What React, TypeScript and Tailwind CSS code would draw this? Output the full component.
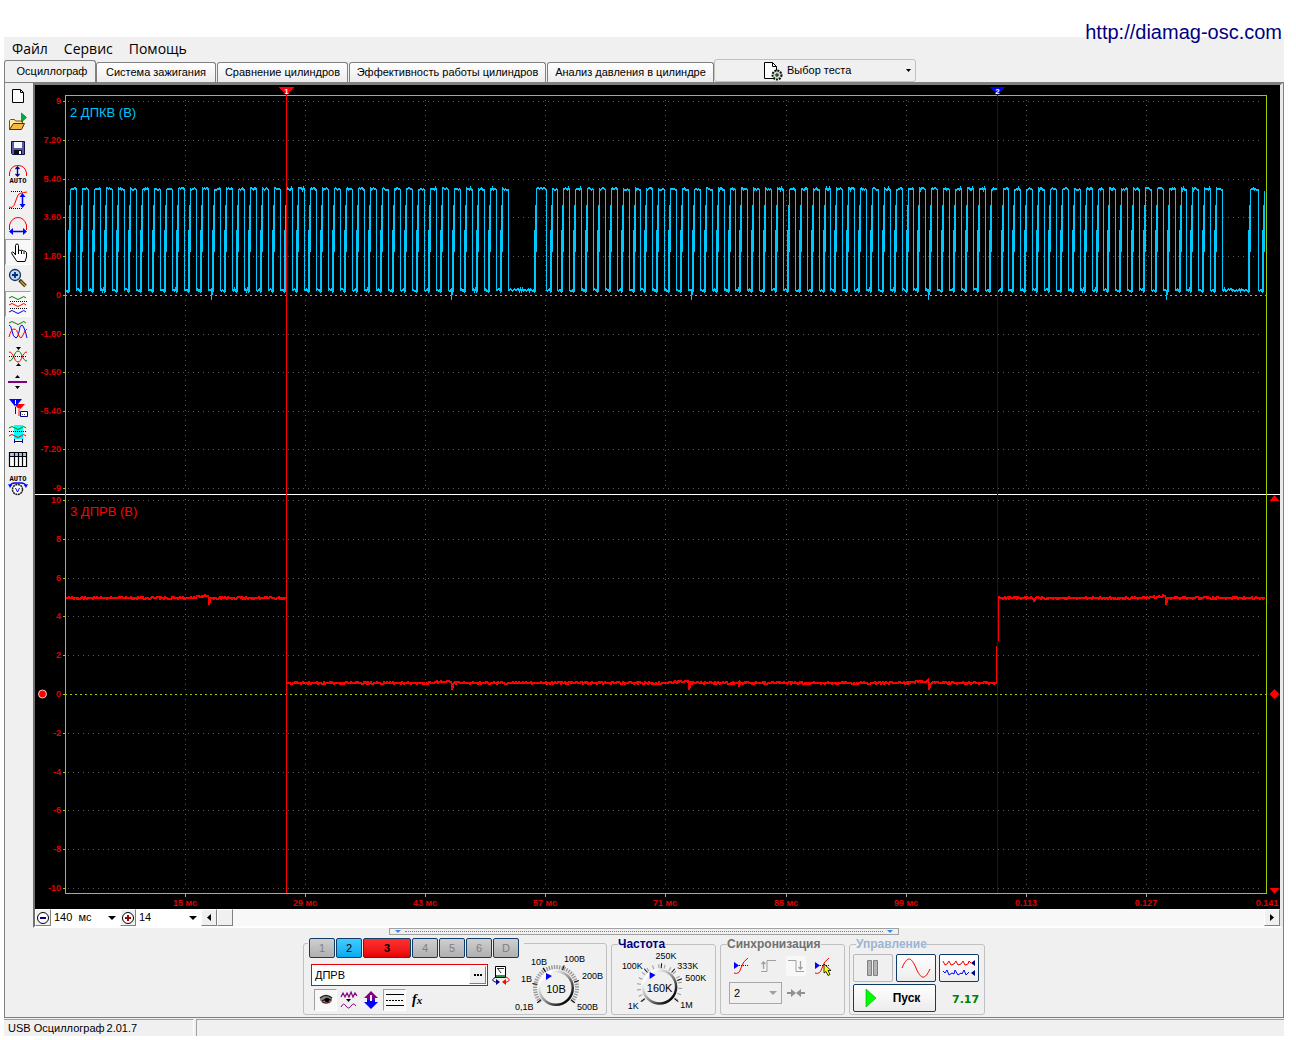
import type { ReactNode } from "react";
import { clsx } from "clsx";

const PLOT = { left: 65, right: 1266, top: 95, bottom: 893 };
const GRID_X = [185, 305, 425, 545, 665, 786, 906, 1026, 1146];
const TIME_LABELS = ["15 мс", "29 мс", "43 мс", "57 мс", "71 мс", "85 мс", "99 мс", "0.113", "0.127", "0.141"];
const ROWS_TOP: [number, string][] = [
  [101, "9"], [140, "7.20"], [179, "5.40"], [217, "3.60"], [256, "1.80"], [295, "0"],
  [334, "-1.80"], [372, "-3.60"], [411, "-5.40"], [449, "-7.20"], [488, "-9"],
];
const ROWS_BOTTOM: [number, string][] = [
  [500, "10"], [539, "8"], [578, "6"], [616, "4"], [655, "2"], [694, "0"],
  [733, "-2"], [772, "-4"], [810, "-6"], [849, "-8"], [888, "-10"],
];

// small repeatable noise, -1..1
const noise = (n: number) => {
  const v = Math.sin(n * 127.1) * 43758.5453;
  return (v - Math.floor(v)) * 2 - 1;
};

const crankTrace = () => {
  const falls: number[] = [];
  for (let k = 0; k <= 36; k++) falls.push(Math.round(76 + k * 12.01));
  for (let k = 0; k <= 57; k++) falls.push(Math.round(545.5 + k * 11.87));
  falls.push(1258);

  const pts: [number, number][] = [];
  const rising = (x: number) => {
    pts.push([x, 291], [x, 230], [x + 1, 230], [x + 1, 290], [x + 1, 205], [x + 2, 205], [x + 2, 250], [x + 2, 190]);
  };

  pts.push([66, 290]);
  rising(68);
  let x = 70;
  falls.forEach((fall, i) => {
    for (; x < fall; x++) pts.push([x, Math.round(188 + noise(x * 3 + i) * 1.2)]);
    pts.push([fall, 189], [fall, 289]);
    const next = falls[i + 1] ?? 1275;
    const rise = next - fall > 20 ? fall + 26 : fall + 4;
    for (x = fall + 1; x < rise; x++) pts.push([x, Math.round(289 + noise(x * 7 + i) * 1.2)]);
    if ([209, 452, 689, 929, 1166].some((s) => Math.abs(s - fall) < 6)) pts.push([rise - 1, 298], [rise, 290]);
    rising(rise);
    x = rise + 2;
  });
  return pts
    .filter(([px]) => px < PLOT.right)
    .map(([px, py]) => `${px + 0.5},${py + 0.5}`)
    .join(" ");
};

const flatTrace = (from: number, to: number, y: number, spikes: number[], nicks: number[] = []) => {
  const pts: string[] = [];
  for (let x = from; x <= to; x++) {
    const ahead = spikes.find((s) => s - x > 0 && s - x < 25);
    const lift = ahead ? (25 - (ahead - x)) / 12 : 0;
    pts.push(`${x},${Math.round(y - lift + noise(x) * 0.9)}`);
    if (spikes.includes(x)) pts.push(`${x},${y + 7}`, `${x + 1},${y + 3}`);
    if (nicks.includes(x)) pts.push(`${x},${y + 4}`);
  }
  return pts.join(" ");
};

const Row = ({ y, label }: { y: number; label: string }) => (
  <g>
    {label === "0" ? (
      <line x1={PLOT.left} x2={PLOT.right} y1={y + 0.5} y2={y + 0.5} stroke="#9acd00" strokeDasharray="2 3" />
    ) : (
      <line x1={PLOT.left + 3} x2={PLOT.right - 4} y1={y + 0.5} y2={y + 0.5} stroke="#5a5a5a" strokeDasharray="1 4" />
    )}
    <line x1={63} x2={66} y1={y + 0.5} y2={y + 0.5} stroke="#9acd00" />
    <text x={61} y={y + 3} textAnchor="end" fill="#e00000" className="text-[9px] font-bold">{label}</text>
  </g>
);

const Chart = () => {
  const crank = crankTrace();
  return (
    <svg viewBox="35 85 1245 824" className="block h-auto w-full bg-black" shapeRendering="crispEdges" role="img" aria-label="Осциллограмма">
      {[...ROWS_TOP, ...ROWS_BOTTOM].map(([y, label]) => <Row key={y} y={y} label={label} />)}
      {GRID_X.map((x) => (
        <g key={x}>
          <path d={`M${x + 0.5} 100V489M${x + 0.5} 499V889`} stroke="#5a5a5a" strokeDasharray="1 4" />
          <path d={`M${x + 0.5} 894v3`} stroke="#aaa" />
        </g>
      ))}
      {TIME_LABELS.map((t, i) => (
        <text key={t} x={GRID_X[i] ?? 1267} y={906} textAnchor="middle" fill="#e00000" className="text-[9px] font-bold">{t}</text>
      ))}
      {/* second pass thickens the flat parts only */}
      <g fill="none" stroke="#00c8ff">
        <polyline points={crank} />
        <polyline points={crank} transform="translate(0 1)" />
      </g>
      <path d="M35 494.5H1280" stroke="#fff" />
      <path d="M65.5 893.5V95.5H1266.5V893.5Z" fill="none" stroke="#9acd00" />
      <polyline points={flatTrace(66, 286, 598, [209])} fill="none" stroke="#f00" strokeWidth="2" />
      <polyline points={flatTrace(287, 996, 683, [452, 689, 929], [739])} fill="none" stroke="#f00" strokeWidth="2" />
      <path d="M997.5 89V893" stroke="#0000e6" />
      <path d="M996.5 684V646M998.5 641V598" stroke="#f00" />
      <polyline points={flatTrace(998, 1265, 598, [1166], [1034])} fill="none" stroke="#f00" strokeWidth="2" />
      <path d="M286.5 89V893" stroke="#f00" />
      <path d="M279 87h15l-7 8h-1z" fill="#f00" />
      <path d="M990 87h15l-7 8h-1z" fill="#00f" />
      <text x={286.5} y={94} textAnchor="middle" fill="#fff" className="text-[8px] font-bold">1</text>
      <text x={997.5} y={94} textAnchor="middle" fill="#fff" className="text-[8px] font-bold">2</text>
      <text x={70} y={117} fill="#00c4ff" className="text-[13px]">2 ДПКВ (В)</text>
      <text x={70} y={516} fill="#f00" className="text-[13px]">3 ДПРВ (В)</text>
      <g fill="#f00" shapeRendering="auto">
        <path d="M1274.5 495l5 6h-10zM1274.5 689l5 5-5 5-5-5zM1269.5 888h10l-5 6z" />
        <circle cx="42.5" cy="694" r="4" stroke="#fff" strokeWidth="0.8" />
      </g>
    </svg>
  );
};

const WAVE = "q3-3 6 0t6 0 5 0";

const TOOLS: { label: string; pressed?: boolean; icon: ReactNode }[] = [
  { label: "Новый", icon: <path d="M4.5 3.5h8l3 3v10h-11zM12.5 3.5v3h3" fill="#fff" stroke="#000" /> },
  {
    label: "Открыть",
    icon: (
      <>
        <path d="M1.5 17.5v-9l1-1h4l1 1.5h7v3" fill="#ffeaa0" stroke="#7a5200" />
        <path d="M1.5 17.5l4-6h11l-3 6z" fill="#f5b942" stroke="#4a3000" />
        <path d="M13.5 1v9l5-4.5z" fill="#00b030" stroke="#006018" strokeWidth=".6" />
      </>
    ),
  },
  {
    label: "Сохранить",
    icon: (
      <>
        <path d="M3.5 3.5h13v13h-12l-1-1z" fill="#5a5aa8" stroke="#101038" />
        <path d="M6 4h8v6H6z" fill="#f4f8ff" />
        <path d="M6 12h8v4H6z" fill="#111" />
        <path d="M11 13h2v3h-2z" fill="#fff" />
      </>
    ),
  },
  {
    label: "Авто по вертикали",
    icon: (
      <>
        <path d="M1.5 12V9Q3 1.5 10 1.5T18.5 9v3" fill="none" stroke="#f00" />
        <path d="M9.5 3v9M7.5 5l2-2 2 2M7.5 10l2 2 2-2" fill="none" stroke="#000080" strokeWidth="1.3" />
        <text x="10" y="19" textAnchor="middle" className="font-['Liberation_Mono',monospace] text-[7px] font-bold">AUTO</text>
      </>
    ),
  },
  {
    label: "Размах",
    icon: (
      <>
        <path d="M1 17q4 2 6-4t3-8 9-3" fill="none" stroke="#f00" />
        <path d="M3 1.5h11M1 18.5h13" stroke="#000" strokeDasharray="1 1" />
        <path d="M14.5 5v12" stroke="#00f" strokeWidth="1.5" />
        <path d="M11.5 7l3-4 3 4zM11.5 14l3 4 3-4z" fill="#00f" />
      </>
    ),
  },
  {
    label: "Период",
    icon: (
      <>
        <path d="M1.5 14V9Q4 1.5 10 1.5T18.5 9v5" fill="none" stroke="#f00" />
        <path d="M4 15.5h12" stroke="#00f" strokeWidth="1.5" />
        <path d="M5 12v7l-4-3.5zM15 12v7l4-3.5z" fill="#00f" />
      </>
    ),
  },
  {
    label: "Рука",
    pressed: true,
    icon: (
      <path
        d="M7.5 13V3.5q0-1.5 1.5-1.5t1.5 1.5V9q.5-1.5 2.500-.5.500-1 2.500.5 1.500-.5 3 1.500v4.500l-1.500 4.500h-8L4 12q-1-2 .5-2t3 3M10.500 9v3M13.500 9v3M16 10v2"
        fill="#fff"
        stroke="#000"
      />
    ),
  },
  {
    label: "Лупа",
    icon: (
      <>
        <path d="M11.5 12l6 6" stroke="#3b2d08" strokeWidth="3.5" />
        <path d="M12.5 13l5 5" stroke="#d0a52c" strokeWidth="1.5" />
        <circle cx="7" cy="7" r="5.5" fill="#b8dcf4" stroke="#1d3054" strokeWidth="1.3" />
        <path d="M4 7h6M7 4v6" stroke="#002b80" strokeWidth="1.8" />
      </>
    ),
  },
  {
    label: "Раздельно",
    pressed: true,
    icon: (
      <>
        <path d={`M1 4${WAVE}`} fill="none" stroke="#008000" />
        <path d={`M1 11${WAVE}`} fill="none" stroke="#f00" />
        <path d={`M1 18${WAVE}`} fill="none" stroke="#00f" />
        <path d="M2 7.5h17M2 14.5h17" stroke="#000" strokeDasharray="1 1" />
      </>
    ),
  },
  {
    label: "Вместе",
    icon: (
      <>
        <path d={`M1 3${WAVE}`} fill="none" stroke="#008000" />
        <path d="M1 5q2 0 3 6t4 7q2 0 4-11 2-4 4 1t3 10" fill="none" stroke="#00f" />
        <path d="M1 17q2-8 5-8t5 7q2 4 4-1t4-6" fill="none" stroke="#f00" />
      </>
    ),
  },
  {
    label: "Совместить",
    icon: (
      <>
        <path d="M1 15C6 15 6 5 10 5s4 10 9 10" fill="none" stroke="#008000" />
        <path d="M1 6c5 0 5 10 9 10s4-10 9-10" fill="none" stroke="#f00" />
        <path d="M1 10.5h18" stroke="#000" strokeDasharray="1 1" />
        <path d="M8 1h5l-2.5 3zM8 20h5l-2.5-3z" />
      </>
    ),
  },
  {
    label: "Разделитель",
    icon: (
      <>
        <path d="M0 9h19v2H0z" fill="#800080" />
        <path d="M7 6h5L9.5 3zM7 14h5l-2.5 3z" />
      </>
    ),
  },
  {
    label: "Маркеры",
    icon: (
      <>
        <path d="M6 6h11l-5.5 6zM10.5 10v8h1v-8z" fill="#f00" />
        <path d="M1 1h13L7.5 9zM7 7v9h1V7z" fill="#00f" />
        <path d="M7.5 2v4" stroke="#fff" />
        <path d="M12.5 13.5h7v5h-7z" fill="#fff" stroke="#000080" />
        <path d="M14 16.5h4" stroke="#555" strokeDasharray="1 1" />
      </>
    ),
  },
  {
    label: "Интервал",
    icon: (
      <>
        <path d="M6 1h9v18H6z" fill="#0ff" />
        <path d={`M1 4${WAVE}`} fill="none" stroke="#008000" />
        <path d={`M1 12${WAVE}`} fill="none" stroke="#f00" />
        <path d="M1 7.5h18" stroke="#000" strokeDasharray="1 1" />
        <path d="M7 15h7v4H7z" fill="#fff" />
        <path d="M6.5 15v4M14.5 15v4M7 17.5h7" stroke="#000080" />
      </>
    ),
  },
  {
    label: "Таблица",
    icon: (
      <>
        <path d="M1.5 3.5h17v13h-17z" fill="#fff" />
        <path d="M2 3h16v4H2z" fill="#a8c8f0" />
        <path d="M1.5 2.5h17v14h-17zM1.5 6.5h17M6.5 3v13M10.5 3v13M14.5 3v13" fill="none" stroke="#000" strokeWidth="1.2" />
      </>
    ),
  },
  {
    label: "Авто",
    icon: (
      <>
        <text x="10" y="5" textAnchor="middle" className="font-['Liberation_Mono',monospace] text-[7px] font-bold">AUTO</text>
        <path d="M2 10q1-3 5-3h6q4 0 5 3" fill="none" stroke="#00f" strokeWidth="1.5" />
        <path d="M0 8l4 1-2 3zM20 8l-4 1 2 3z" fill="#00f" />
        <circle cx="9.5" cy="13.5" r="5" fill="#fff" stroke="#222" strokeWidth="1.5" strokeDasharray="2 .6" />
        <path d="M7.5 12l2 4 2-4" fill="none" stroke="#00f" />
      </>
    ),
  },
];

const Toolbar = () => (
  <div className="flex w-7 shrink-0 flex-col" role="toolbar">
    {TOOLS.map(({ label, pressed, icon }) => (
      <button
        key={label}
        type="button"
        aria-label={label}
        className={clsx(
          "flex h-[26px] w-[26px] items-center justify-center border",
          pressed ? "border-t-[#a0a0a0] border-r-white border-b-white border-l-[#a0a0a0] bg-[#f8f8f8]" : "border-transparent",
        )}
      >
        <svg viewBox="0 0 20 20" className="size-5 shrink-0">{icon}</svg>
      </button>
    ))}
  </div>
);

const TABS = [
  { label: "Система зажигания", width: "w-[120px]" },
  { label: "Сравнение цилиндров", width: "w-[131px]" },
  { label: "Эффективность работы цилиндров", width: "w-[197px]" },
  { label: "Анализ давления в цилиндре", width: "w-[167px]" },
];

const Tabs = () => (
  <div className="flex h-[23px] items-end text-[11px] whitespace-nowrap">
    <button type="button" className="h-[22px] w-[92px] rounded-t-[3px] border border-b-0 border-[#808080] pl-1">
      Осциллограф
    </button>
    <div className="flex gap-px">
      {TABS.map(({ label, width }) => (
        <button
          key={label}
          type="button"
          className={clsx("h-5 rounded-t-[3px] border border-b-0 border-[#808080] bg-gradient-to-b from-white to-[#ececec]", width)}
        >
          {label}
        </button>
      ))}
    </div>
    <button type="button" className="flex h-[23px] w-[202px] items-center rounded-[3px] border border-[#c0c0c0] pr-1 pl-12">
      <svg viewBox="0 0 20 20" className="size-5">
        <path d="M1.5 1.5h8l4 4v12h-12z" fill="#fff" stroke="#000" />
        <path d="M9.5 1.5v4h4" fill="none" stroke="#000" />
        <circle cx="14" cy="14" r="4.5" fill="#c4dcc4" stroke="#111" strokeWidth="2" strokeDasharray="2 1" />
        <path d="M12 14h4M14 12v4" stroke="#111" />
      </svg>
      <span className="ml-1 grow text-left">Выбор теста</span>
      <svg viewBox="0 0 5 3" className="h-[3px] w-[5px]"><path d="M0 0h5L2.5 3z" /></svg>
    </button>
  </div>
);

const ZoomSelect = ({ label, value, width }: { label: string; value: string; width: string }) => (
  <div className={clsx("relative", width)}>
    <select aria-label={label} className="block h-4 w-full appearance-none bg-white pl-[3px] text-[11px] leading-4">
      <option>{value}</option>
    </select>
    <svg viewBox="0 0 8 4" className="pointer-events-none absolute top-[7px] right-1 h-1 w-2"><path d="M0 0h8L4 4z" /></svg>
  </div>
);

const RAISED = "flex items-center justify-center border border-t-white border-l-white border-r-[#808080] border-b-[#808080] bg-[#f0f0f0]";

const ScrollRow = () => (
  <div className="flex h-[17px] bg-white">
    <button type="button" aria-label="Уменьшить масштаб" className={clsx(RAISED, "w-4")}>
      <svg viewBox="0 0 14 14" className="size-[14px] shrink-0">
        <circle cx="7" cy="7" r="5.5" fill="#fff" stroke="#000" />
        <path d="M4 7h6" stroke="#000080" strokeWidth="2" />
      </svg>
    </button>
    <ZoomSelect label="Развёртка" value={"140 \u00a0мс"} width="w-[69px]" />
    <button type="button" aria-label="Увеличить масштаб" className={clsx(RAISED, "w-4")}>
      <svg viewBox="0 0 14 14" className="size-[14px] shrink-0">
        <circle cx="7" cy="7" r="5.5" fill="#fff" stroke="#000" />
        <path d="M4 7h6M7 4v6" stroke="#a00000" strokeWidth="2" />
      </svg>
    </button>
    <ZoomSelect label="Масштаб" value="14" width="w-[65px]" />
    <div className="flex grow justify-between bg-[#f8f8f8]">
      <div className="flex">
        <button type="button" aria-label="Влево" className={clsx(RAISED, "w-4")}>
          <svg viewBox="0 0 4 7" className="h-[7px] w-1"><path d="M4 0v7L0 3.5z" /></svg>
        </button>
        <div className={clsx(RAISED, "w-4")} />
      </div>
      <button type="button" aria-label="Вправо" className={clsx(RAISED, "w-4")}>
        <svg viewBox="0 0 4 7" className="h-[7px] w-1"><path d="M0 0v7l4-3.5z" /></svg>
      </button>
    </div>
  </div>
);

type Mark = { text: string; x: number; y: number; angle: number };

// Rotary switch, drawn around its own centre
const Dial = ({ box, className, value, marks, dense }: { box: string; className: string; value: string; marks: Mark[]; dense?: boolean }) => {
  const step = dense ? 7 : 16;
  const ticks: number[] = [];
  for (let a = -130; a <= 130; a += step) ticks.push(a);
  return (
    <svg viewBox={box} className={className}>
      <defs>
        <linearGradient id={`rim${value}`} x1="0" y1="0" x2="1" y2="1">
          <stop offset="0.2" stopColor="#fff" />
          <stop offset="0.5" stopColor="#999" />
          <stop offset="0.85" stopColor="#000" />
        </linearGradient>
      </defs>
      {ticks.map((a) => (
        <path key={a} d="M0 -19V-23" stroke="#999" strokeWidth={dense ? 1.4 : 1} transform={`rotate(${a})`} />
      ))}
      {marks.map((m) => (
        <g key={m.text}>
          <path d="M0 -19V-24" stroke="#000" transform={`rotate(${m.angle})`} />
          <text x={m.x} y={m.y} className="text-[9px]">{m.text}</text>
        </g>
      ))}
      <circle r="18" fill={`url(#rim${value})`} />
      <circle r="15.5" fill="#f0f0f0" />
      <path d="M-10-15v7l6-4z" fill="#00f" />
      <text y="5" textAnchor="middle" className="text-[11px]">{value}</text>
    </svg>
  );
};

const CHANNELS = [
  { id: "1", look: "w-[26px] from-[#cfcfcf] to-[#b0b0b0] text-[#808080]" },
  { id: "2", look: "w-[26px] from-[#40ccff] to-[#00aaf0] text-black" },
  { id: "3", look: "w-[48px] from-[#ff3030] to-[#e60000] font-bold text-black" },
  { id: "4", look: "w-[26px] from-[#cfcfcf] to-[#b0b0b0] text-[#808080]" },
  { id: "5", look: "w-[26px] from-[#cfcfcf] to-[#b0b0b0] text-[#808080]" },
  { id: "6", look: "w-[26px] from-[#cfcfcf] to-[#b0b0b0] text-[#808080]" },
  { id: "D", look: "w-[26px] from-[#cfcfcf] to-[#b0b0b0] text-[#808080]" },
];

const ICON_PRESSED = "border border-t-[#a0a0a0] border-l-[#a0a0a0] border-r-white border-b-white bg-[#f8f8f8]";

const ChannelPanel = () => (
  <section className="mt-[5px] flex w-[304px] rounded-[3px] border border-[#c0c0c0]">
    <div className="-mt-1.5 ml-1 w-[216px] shrink-0">
      <div className="flex gap-px bg-[#f0f0f0] pl-px">
        {CHANNELS.map(({ id, look }) => (
          <button
            key={id}
            type="button"
            className={clsx("h-5 rounded-[2px] border border-[#103c68] bg-gradient-to-b text-[11px] leading-4", look)}
          >
            {id}
          </button>
        ))}
      </div>
      <div className="mt-1.5 flex items-center gap-1 pl-[3px]">
        <div className="flex h-[22px] w-[177px] border border-red-600 bg-white p-px">
          <input aria-label="Имя канала" defaultValue="ДПРВ" className="w-0 grow bg-white pl-0.5 text-[11px] outline-none" />
          <button type="button" aria-label="Список датчиков" className={clsx(RAISED, "w-[17px]")}>
            <svg viewBox="0 0 8 2" className="h-0.5 w-2"><path d="M0 0h2v2H0zM3 0h2v2H3zM6 0h2v2H6z" /></svg>
          </button>
        </div>
        <button type="button" aria-label="Калибровка">
          <svg viewBox="0 0 20 20" className="size-5">
            <path d="M3.5 1.5h10v11h-10z" fill="#fff" stroke="#000" />
            <path d="M4 10h9v2H4z" fill="#2c9048" />
            <path d="M5 3.5h7M6 4l3 4" stroke="#000" strokeWidth=".8" />
            <path d="M4 12q-6 3-1 5h2" fill="none" stroke="#000080" />
            <path d="M4 14v6l4-3z" fill="#000080" />
            <path d="M14 12q6 3 1 5h-2" fill="none" stroke="#f00" />
            <path d="M14 14v6l-4-3z" fill="#f00" />
          </svg>
        </button>
      </div>
      <div className="mt-[3px] flex items-center pl-1.5">
        <button type="button" aria-label="Видимость" className={clsx(ICON_PRESSED, "flex h-[22px] w-[23px] items-center justify-center")}>
          <svg viewBox="0 0 14 12" className="h-3 w-[14px]">
            <path d="M1 4q6-4 12 0v3q-2 3-6 3T1 6z" fill="#8a8a8a" />
            <path d="M1 4q6-5 12 0M3 7q4-3 9-1" fill="none" stroke="#222" strokeWidth="1.5" />
            <circle cx="8" cy="6" r="2.3" fill="#000" />
            <path d="M3 8q4 2 8 0" fill="none" stroke="#602020" />
          </svg>
        </button>
        <button type="button" aria-label="Фильтр" className="ml-[3px]">
          <svg viewBox="0 0 18 20" className="h-5 w-[18px]" fill="none" stroke="#800080">
            <path d="M1 7l2-4 2 4 2-4 2 4 2-5 2 5 2-4 2 3" strokeWidth="1.2" />
            <path d="M1 17q2.5-5 5-1t5 0 5 0" />
            <path d="M6 9h5l-2.5 3z" fill="#000" stroke="none" />
          </svg>
        </button>
        <button type="button" aria-label="Инверсия" className="ml-1">
          <svg viewBox="0 0 18 20" className="h-5 w-[18px]">
            <path d="M9 1l7 7h-3v2H5V8H2z" fill="#800080" />
            <path d="M9 19l7-7h-3v-2H5v2H2z" fill="#00f" />
            <path d="M9 5v6" stroke="#f0f0f0" strokeWidth="2" />
          </svg>
        </button>
        <button type="button" aria-label="Смещение нуля" className={clsx(ICON_PRESSED, "ml-[3px] flex h-[22px] w-[23px] items-center justify-center")}>
          <svg viewBox="0 0 18 14" className="h-[14px] w-[18px]" stroke="#000">
            <path d="M0 1.5h18M0 12.5h18" />
            <path d="M0 7.5h18" strokeDasharray="2 1" />
          </svg>
        </button>
        <button type="button" aria-label="Функция" className="ml-1.5 font-['Liberation_Serif',serif] text-[14px] leading-4 font-bold italic">
          f<span className="text-[11px]">x</span>
        </button>
      </div>
    </div>
    <Dial
      dense
      box="-43 -38 94 64"
      className="mt-1.5 -ml-[11px] h-16 w-[94px] shrink-0"
      value="10В"
      marks={[
        { text: "0,1В", x: -41, y: 22, angle: -128 },
        { text: "1В", x: -35, y: -6, angle: -79 },
        { text: "10В", x: -25, y: -23, angle: -33 },
        { text: "100В", x: 8, y: -26, angle: 20 },
        { text: "200В", x: 26, y: -9, angle: 72 },
        { text: "500В", x: 21, y: 22, angle: 128 },
      ]}
    />
  </section>
);

const Group = ({ title, tone, className, children }: { title: string; tone: string; className: string; children: ReactNode }) => (
  <fieldset className={clsx("rounded-[3px] border border-[#c0c0c0]", className)}>
    <legend className={clsx("ml-1.5 text-[12px] leading-3 font-bold", tone)}>{title}</legend>
    {children}
  </fieldset>
);

const SyncIcon = ({ cursor }: { cursor?: boolean }) => (
  <svg viewBox="0 0 20 20" className="size-5">
    <path d="M2 17q5 2 7-5t7-10" fill="none" stroke="#f00" />
    <path d="M2 6v7l5-3.5z" fill="#00f" />
    <path d="M7 9.5h9" stroke="#00f" strokeDasharray="1 1" />
    {cursor && <path d="M11 8v9l2-1.5 2 4 2-1-2-4h3z" fill="#ff0" stroke="#000" strokeWidth=".8" />}
  </svg>
);

const SyncPanel = () => (
  <Group title="Синхронизация" tone="text-[#707070]" className="w-[125px]">
    <div className="mt-1.5 flex justify-between px-[11px]">
      <button type="button" aria-label="Уровень"><SyncIcon /></button>
      <button type="button" disabled aria-label="Фронт">
        <svg viewBox="0 0 20 20" className="size-5" fill="none" stroke="#a0a0a0">
          <path d="M2 15.5h6v-11h9" /><path d="M4.5 13V6M2.5 8l2-2 2 2" strokeWidth="1.3" />
        </svg>
      </button>
      <button type="button" disabled aria-label="Спад" className="bg-[#f8f8f8]">
        <svg viewBox="0 0 20 20" className="size-5" fill="none" stroke="#a0a0a0">
          <path d="M2 4.5h8v11h8" /><path d="M14.5 5v8M12.5 11l2 2 2-2" strokeWidth="1.3" />
        </svg>
      </button>
      <button type="button" aria-label="Захват"><SyncIcon cursor /></button>
    </div>
    <div className="mt-1.5 flex items-center pl-2">
      <div className="relative">
        <select aria-label="Канал синхронизации" className="block h-[22px] w-[53px] appearance-none border border-[#a8a8a8] bg-[#f0f0f0] pl-1 text-[11px]">
          <option>2</option>
        </select>
        <svg viewBox="0 0 8 4" className="pointer-events-none absolute top-[9px] right-[5px] h-1 w-2" fill="#a0a0a0"><path d="M0 0h8L4 4z" /></svg>
      </div>
      <svg viewBox="0 0 18 10" className="ml-[5px] h-[10px] w-[18px]" fill="#909090">
        <path d="M0 4h4V1l5 4-5 4V6H0zM18 4h-4V1L9 5l5 4V6h4z" />
      </svg>
    </div>
  </Group>
);

const COMMAND = "flex items-center justify-center rounded-[2px] border border-[#103c68] bg-gradient-to-b from-white to-[#ececec]";

const ControlPanel = () => (
  <Group title="Управление" tone="text-[#9db4d4]" className="w-[136px]">
    <div className="mt-1 flex gap-[3px] pl-[3px]">
      <button type="button" disabled aria-label="Пауза" className="flex h-7 w-10 items-center justify-center rounded-[2px] border border-[#b8b8b8]">
        <svg viewBox="0 0 12 16" className="h-4 w-3" fill="#b4b4b4" stroke="#808080"><path d="M.5.5h4v15h-4zM6.5.5h4v15h-4z" /></svg>
      </button>
      <button type="button" aria-label="Один канал" className={clsx(COMMAND, "h-7 w-10")}>
        <svg viewBox="0 0 30 20" className="h-5 w-[30px]" fill="none" stroke="#f00"><path d="M1 10C6-2 10-2 15 10s9 12 14 1" /></svg>
      </button>
      <button type="button" aria-label="Два канала" className={clsx(COMMAND, "h-7 w-10")}>
        <svg viewBox="0 0 34 20" className="h-5 w-[34px] shrink-0" fill="none">
          <path d="M1 3l2 4 2-1 2-3 2 4 3-1 2-3 2 4 3-1 2-3 2 4 3-1 1-3 2 2" stroke="#f00" />
          <path d="M1 13l2 2 2-3 2 5 3-2 2 1 1-4 3 5 3-2 1 1 2-4 2 5 3-3" stroke="#00f" />
          <path d="M33 2v6l-4-3zM33 12v6l-4-3z" fill="#000080" />
        </svg>
      </button>
    </div>
    <div className="mt-0.5 flex items-center pl-[3px]">
      <button type="button" className={clsx(COMMAND, "h-7 w-[83px] gap-4 pr-1 text-[12px] font-bold")}>
        <svg viewBox="0 0 12 18" className="h-[18px] w-3"><path d="M1 0v18l10-9z" fill="#0f0" stroke="#0a0" strokeWidth=".6" /></svg>
        Пуск
      </button>
      <span className="ml-4 pt-1 font-['DejaVu_Sans',sans-serif] text-[11px] font-bold text-[#008000]">7.17</span>
    </div>
  </Group>
);

const App = () => (
  <div className="relative bg-white pt-[37px] pr-3 pl-1 font-['Liberation_Sans',Arial,sans-serif] text-black">
    <a href="http://diamag-osc.com" className="absolute top-5 right-[14px] text-[20px] leading-6 text-[#000080]">
      http://diamag-osc.com
    </a>
    <div className="bg-[#f0f0f0]">
      <nav className="flex h-[22px] gap-4 pl-2 font-['Open_Sans',sans-serif] text-[14px]">
        <button type="button">Файл</button>
        <button type="button">Сервис</button>
        <button type="button">Помощь</button>
      </nav>
      <Tabs />
      <main className="border border-[#808080]">
        <div className="flex">
          <Toolbar />
          <div className="min-w-0 grow border-t-2 border-r-[3px] border-b-2 border-l-2 border-t-[#808080] border-r-[#e8e8e8] border-b-white border-l-[#707070]">
            <Chart />
            <ScrollRow />
          </div>
        </div>
        <div className="flex justify-center">
          <div className="flex h-[7px] w-[510px] items-center gap-1 border border-[#a0a0a0] px-[5px]">
            <svg viewBox="0 0 6 3" className="h-[3px] w-1.5" fill="#2f8cf0"><path d="M0 0h6L3 3z" /></svg>
            <div className="grow border-t border-dotted border-[#2f8cf0]" />
            <svg viewBox="0 0 6 3" className="h-[3px] w-1.5" fill="#2f8cf0"><path d="M0 0h6L3 3z" /></svg>
          </div>
        </div>
        <div className="mt-[3px] mb-0.5 flex h-[77px] items-stretch justify-center gap-1">
          <ChannelPanel />
          <Group title="Частота" tone="text-[#000080]" className="w-[105px]">
            <Dial
              box="-48 -37 104 62"
              className="h-[62px] w-[103px]"
              value="160K"
              marks={[
                { text: "1K", x: -32, y: 22, angle: -128 },
                { text: "100K", x: -38, y: -18, angle: -40 },
                { text: "250K", x: -4, y: -28, angle: 5 },
                { text: "333K", x: 18, y: -18, angle: 40 },
                { text: "500K", x: 26, y: -6, angle: 70 },
                { text: "1M", x: 21, y: 21, angle: 128 },
              ]}
            />
          </Group>
          <SyncPanel />
          <ControlPanel />
        </div>
      </main>
      <footer className="mt-px flex h-[17px] gap-0.5 text-[11px] leading-4">
        <div className="flex w-[190px] gap-0.5 border-t border-r border-t-[#a0a0a0] border-r-white pl-1">
          <span>USB Осциллограф</span>
          <span>2.01.7</span>
        </div>
        <div className="grow border-t border-l border-[#a0a0a0]" />
      </footer>
    </div>
  </div>
);

export default App;
